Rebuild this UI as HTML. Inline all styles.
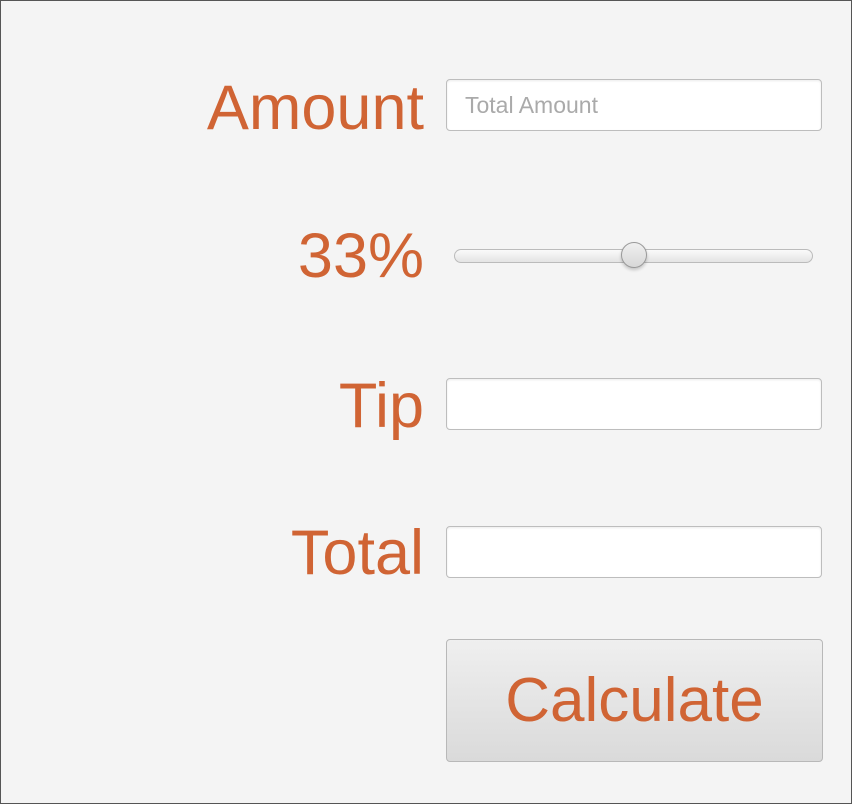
<!DOCTYPE html>
<html><head><meta charset="utf-8"><style>
html,body{margin:0;padding:0}
body{width:852px;height:804px;background:#f4f4f4;position:relative;overflow:hidden;font-family:"Liberation Sans",sans-serif;box-sizing:border-box;border:1px solid #555}
.lbl{position:absolute;right:427px;font-size:63px;line-height:63px;color:#d06434;white-space:nowrap}
.inp{position:absolute;left:445px;width:374px;height:50px;background:#fff;border:1px solid #bdbdbd;border-radius:4px;box-shadow:inset 0 1px 2px rgba(0,0,0,0.08)}
.ph{position:absolute;left:18px;top:12px;font-size:23px;color:#aaa}
.track{position:absolute;left:453px;top:248px;width:357px;height:12px;border:1px solid #bbb;border-radius:7px;background:linear-gradient(#fafafa,#e4e4e4)}
.thumb{position:absolute;left:620px;top:241px;width:26px;height:26px;border-radius:50%;border:1px solid #999;box-sizing:border-box;background:linear-gradient(#f0f0f0,#d8d8d8);box-shadow:0 2px 3px rgba(0,0,0,0.2)}
.btn{position:absolute;left:445px;top:638px;width:375px;height:121px;border:1px solid #b8b8b8;border-radius:4px;background:linear-gradient(#efefef,#dadada);text-align:center;font-size:62px;line-height:121px;color:#d06434}
</style></head><body>
<div class="lbl" style="top:76px">Amount</div>
<div class="inp" style="top:78px"><span class="ph">Total Amount</span></div>
<div class="lbl" style="top:224px">33%</div>
<div class="track"></div>
<div class="thumb"></div>
<div class="lbl" style="top:374px">Tip</div>
<div class="inp" style="top:377px"></div>
<div class="lbl" style="top:521px">Total</div>
<div class="inp" style="top:525px"></div>
<div class="btn">Calculate</div>
</body></html>
